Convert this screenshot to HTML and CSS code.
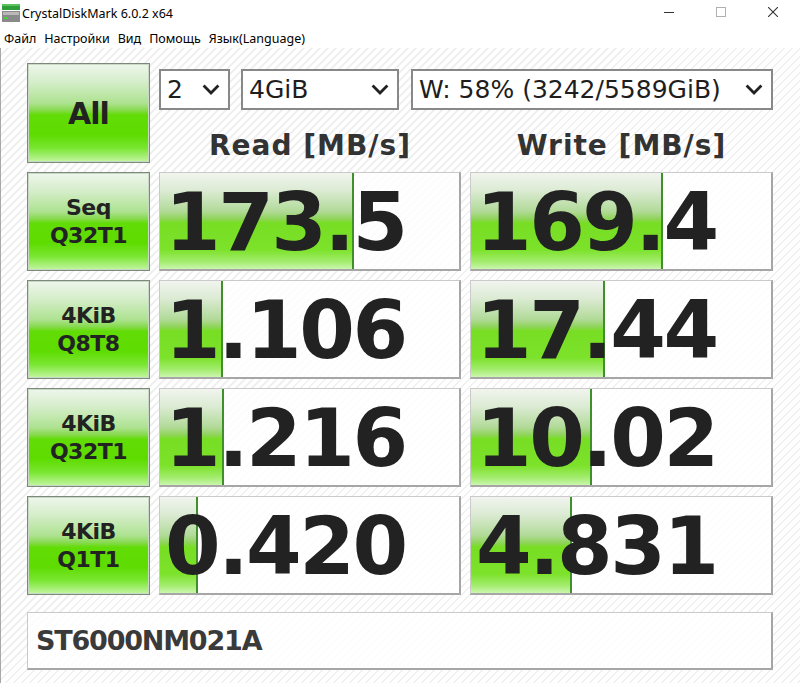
FILE: index.html
```html
<!DOCTYPE html>
<html lang="ru">
<head>
<meta charset="utf-8">
<title>CrystalDiskMark 6.0.2 x64</title>
<link rel="stylesheet" href="styles.css">
</head>
<body>
<div class="titlebar">
  <svg class="appicon" viewBox="0 0 18 18" aria-hidden="true">
    <rect x="0" y="0" width="18" height="6" fill="#2f9e3a"/>
    <rect x="0" y="0" width="18" height="2" fill="#5cc45e"/>
    <rect x="0" y="7" width="18" height="11" fill="#8a8a8a"/>
    <rect x="1" y="8" width="16" height="3" fill="#b9b9b9"/>
    <rect x="2" y="13" width="4" height="2" fill="#49d13a"/>
  </svg>
  <span class="title">CrystalDiskMark 6.0.2 x64</span>
  <div class="controls">
    <span class="ctl"><svg viewBox="0 0 10 10"><line x1="0" y1="5.5" x2="10" y2="5.5" stroke="#333" stroke-width="1"/></svg></span>
    <span class="ctl"><svg viewBox="0 0 10 10"><rect x="0.5" y="0.5" width="9" height="9" fill="none" stroke="#b0b0b0" stroke-width="1"/></svg></span>
    <span class="ctl"><svg viewBox="0 0 10 10"><path d="M0 0 L10 10 M10 0 L0 10" stroke="#333" stroke-width="1.1"/></svg></span>
  </div>
</div>
<div class="menubar">
  <span>Файл</span><span>Настройки</span><span>Вид</span><span>Помощь</span><span>Язык(Language)</span>
</div>
<div class="main">
  <div class="grid">
    <div class="btn all">All</div>
    <div class="top">
      <div class="selects">
        <div class="select s-count"><span>2</span><svg class="chev" viewBox="0 0 18 11"><polyline points="1.6,1.6 9,9 16.4,1.6" fill="none" stroke="#222" stroke-width="2.8"/></svg></div>
        <div class="select s-size"><span>4GiB</span><svg class="chev" viewBox="0 0 18 11"><polyline points="1.6,1.6 9,9 16.4,1.6" fill="none" stroke="#222" stroke-width="2.8"/></svg></div>
        <div class="select s-drive"><span>W: 58% (3242/5589GiB)</span><svg class="chev" viewBox="0 0 18 11"><polyline points="1.6,1.6 9,9 16.4,1.6" fill="none" stroke="#222" stroke-width="2.8"/></svg></div>
      </div>
      <div class="heads">
        <div class="head">Read [MB/s]</div>
        <div class="head">Write [MB/s]</div>
      </div>
    </div>

    <div class="btn label">Seq<br>Q32T1</div>
    <div class="cell" style="--w:194px">173.5</div>
    <div class="cell" style="--w:192px">169.4</div>

    <div class="btn label">4KiB<br>Q8T8</div>
    <div class="cell" style="--w:63px">1.106</div>
    <div class="cell" style="--w:134px">17.44</div>

    <div class="btn label">4KiB<br>Q32T1</div>
    <div class="cell" style="--w:64px">1.216</div>
    <div class="cell" style="--w:121px">10.02</div>

    <div class="btn label">4KiB<br>Q1T1</div>
    <div class="cell" style="--w:38px">0.420</div>
    <div class="cell" style="--w:101px">4.831</div>
  </div>
  <div class="drive">ST6000NM021A</div>
</div>
</body>
</html>
```
FILE: styles.css
```css
html, body {
  margin: 0;
  padding: 0;
}
body {
  width: 800px;
  height: 683px;
  overflow: hidden;
  background: #fff;
  font-family: "Noto Sans", "Open Sans", sans-serif;
  color: #000;
}

/* title bar */
.titlebar {
  height: 28px;
  display: flex;
  align-items: center;
  padding-left: 2px;
  font-size: 12.5px;
}
.appicon {
  width: 18px;
  height: 18px;
  margin-right: 2px;
  margin-top: -2px;
}
.title {
  margin-top: -2px;
}
.controls {
  margin-left: auto;
  margin-right: 1px;
  display: flex;
  align-self: stretch;
}
.ctl {
  width: 52px;
  display: flex;
  justify-content: center;
  align-items: flex-start;
  padding-top: 7px;
}
.ctl svg {
  width: 10px;
  height: 10px;
}

/* menu bar */
.menubar {
  height: 20px;
  display: flex;
  align-items: center;
  gap: 8px;
  padding-left: 4px;
  font-size: 12.5px;
}

/* main area */
.main {
  height: 635px;
  box-sizing: border-box;
  border-left: 1px solid #a8a8a8;
  padding: 15px 0 0 26px;
  background: repeating-linear-gradient(135deg, #ffffff 0 4px, #f0f0f0 4px 5.66px);
}
.grid {
  display: grid;
  grid-template-columns: 123px 302px 303px;
  grid-template-rows: 100px repeat(4, 99px);
  column-gap: 9px;
  row-gap: 9px;
}

/* green buttons */
.btn {
  box-sizing: border-box;
  border: 1px solid #7b8a7b;
  box-shadow: inset 0 0 0 1px #c9d9c6;
  background: linear-gradient(to bottom,
    #eef6ec 0%, #d6eecb 18%, #ade290 40%, #88da50 47%,
    #62dc06 52%, #5edc00 72%, #7ae632 86%, #aaf07c 95%, #c2f6a0 100%);
  display: flex;
  align-items: center;
  justify-content: center;
  text-align: center;
  font-family: "DejaVu Sans", sans-serif;
  font-weight: bold;
  color: #222;
}
.all {
  font-size: 30px;
  letter-spacing: -1px;
}
.label {
  font-size: 22px;
  line-height: 28px;
  letter-spacing: -0.5px;
}

/* top selectors */
.top {
  grid-column: 2 / 4;
  display: flex;
  flex-direction: column;
}
.selects {
  display: flex;
  margin-top: 6px;
  height: 41px;
}
.select {
  box-sizing: border-box;
  height: 41px;
  border: 2px solid #888;
  background: #fff;
  display: flex;
  align-items: center;
  justify-content: space-between;
  padding: 0 8px 0 6px;
  font-family: "DejaVu Sans", sans-serif;
  font-size: 25px;
  color: #1e1e1e;
}
.s-count { width: 71px; }
.s-size { width: 158px; margin-left: 11px; }
.s-drive { width: 362px; margin-left: 12px; }
.chev {
  width: 18px;
  height: 11px;
}
.heads {
  display: grid;
  grid-template-columns: 302px 303px;
  column-gap: 9px;
  margin-top: 19px;
}
.head {
  text-align: center;
  font-family: "DejaVu Sans", sans-serif;
  font-weight: bold;
  font-size: 28px;
  line-height: 34px;
  letter-spacing: 1px;
  color: #333;
}

/* result cells */
.cell {
  box-sizing: border-box;
  border: 1px solid #cacaca;
  border-right: 2px solid #a6a6a6;
  border-bottom: 2px solid #a6a6a6;
  background:
    linear-gradient(#3f8f2a, #3f8f2a) no-repeat calc(var(--w) - 2px) 0 / 2px 100%,
    linear-gradient(to bottom,
      #f1f4ef 0%, #dcebd4 18%, #b1da98 40%, #8ed458 48%,
      #78de24 52%, #7ce22a 80%, #a2ec6c 92%, #cbf6ae 100%) no-repeat 0 0 / var(--w) 100%,
    rgba(255, 255, 255, 0.8);
  display: flex;
  align-items: center;
  padding: 4px 0 0 5px;
  font-family: "DejaVu Sans", sans-serif;
  font-weight: bold;
  font-size: 80px;
  line-height: 1;
  letter-spacing: -2.5px;
  color: #222;
}

/* drive name */
.drive {
  box-sizing: border-box;
  width: 746px;
  height: 58px;
  margin-top: 17px;
  border: 1px solid #cacaca;
  border-right: 2px solid #a6a6a6;
  border-bottom: 2px solid #a6a6a6;
  background: rgba(255, 255, 255, 0.8);
  display: flex;
  align-items: center;
  padding-left: 8px;
  font-family: "DejaVu Sans", sans-serif;
  font-weight: bold;
  font-size: 27px;
  letter-spacing: -1.2px;
  color: #3a3a3a;
}
```
